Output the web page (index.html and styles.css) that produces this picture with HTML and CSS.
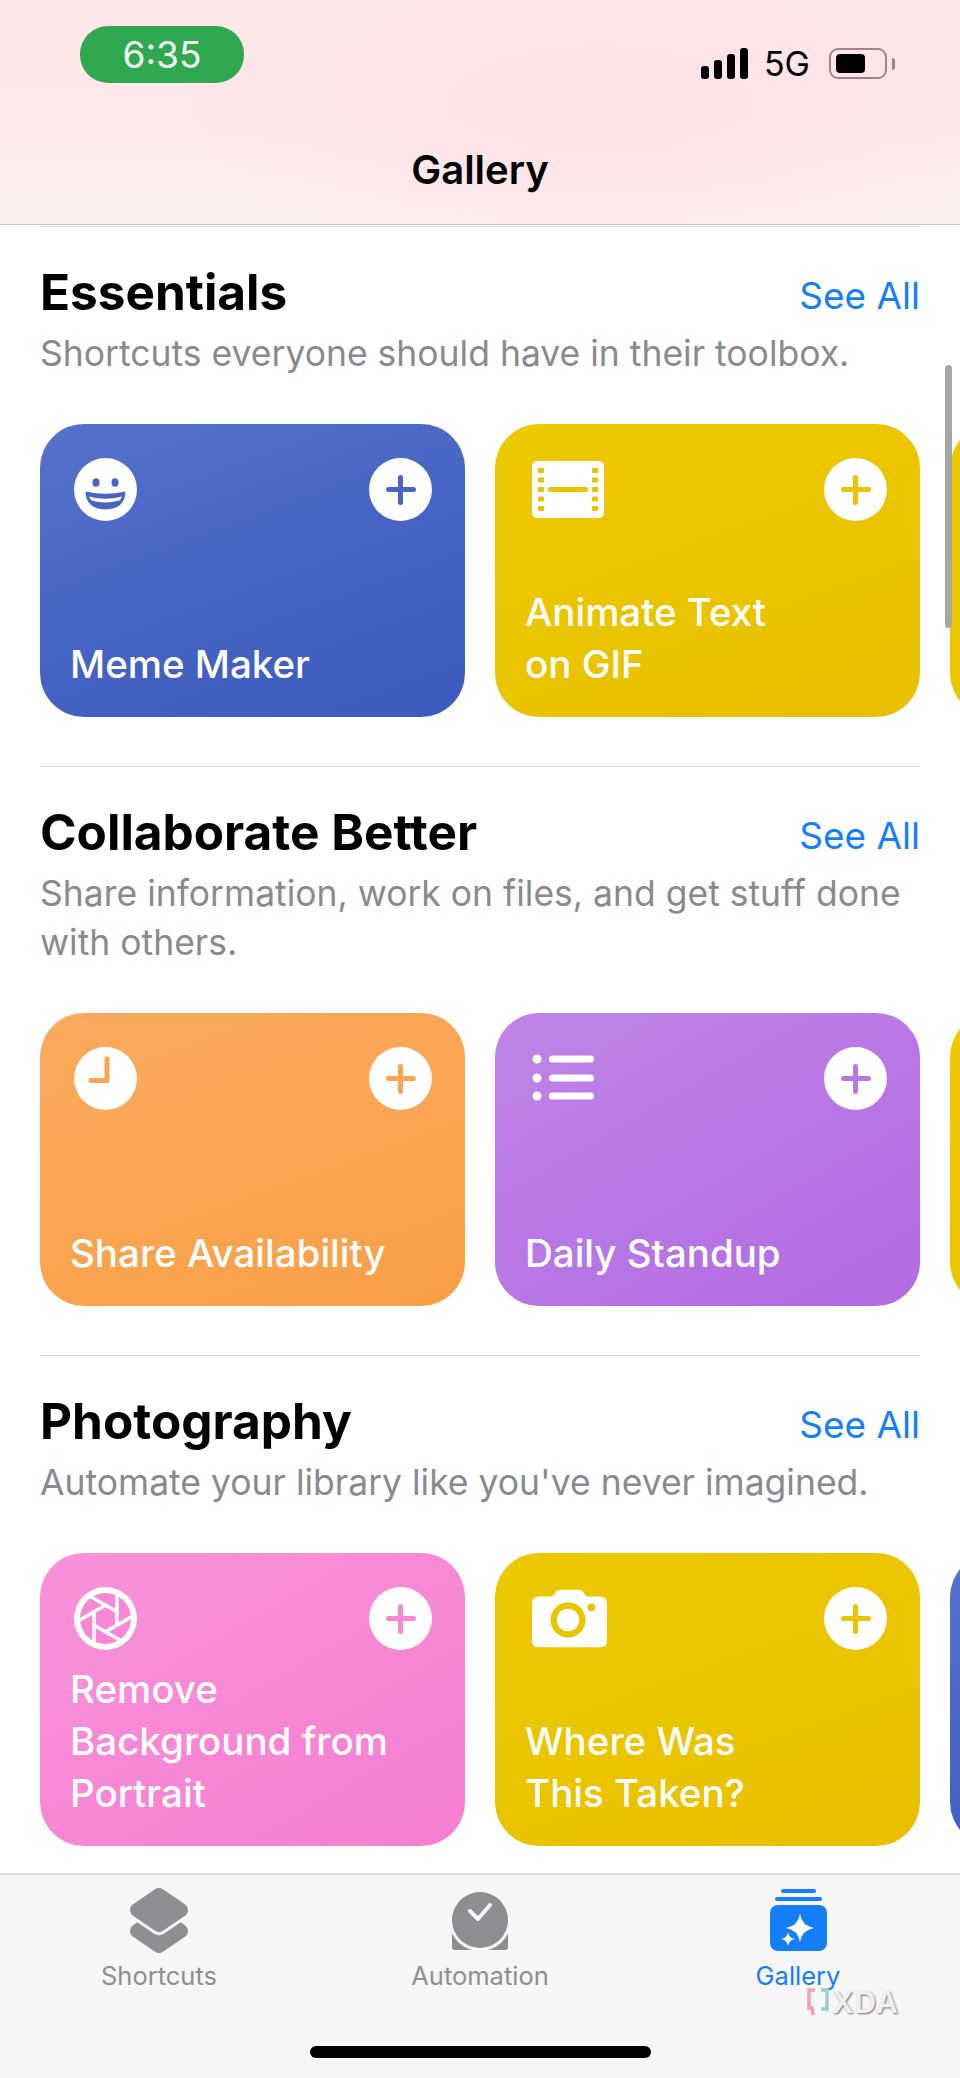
FILE: index.html
```html
<!DOCTYPE html>
<html lang="en">
<head>
    <meta charset="UTF-8">
    <meta name="viewport" content="width=device-width, initial-scale=1.0">
    <title>Gallery</title>
    <link rel="stylesheet" href="styles.css">
</head>
<body>
    <header class="top-bar">
        <div class="status-row">
            <div class="time-pill">6:35</div>
            <div class="status-icons">
                <svg class="signal" width="47" height="31" viewBox="0 0 47 31">
                    <rect x="0" y="18" width="8" height="13" rx="3"/>
                    <rect x="13" y="12" width="8" height="19" rx="3"/>
                    <rect x="26" y="6" width="8" height="25" rx="3"/>
                    <rect x="39" y="0" width="8" height="31" rx="3"/>
                </svg>
                <span class="network">5G</span>
                <div class="battery"><div class="battery-level"></div></div>
                <div class="battery-tip"></div>
            </div>
        </div>
        <h1 class="page-title">Gallery</h1>
    </header>

    <main class="gallery">
        <section class="group">
            <div class="group-head">
                <h2>Essentials</h2>
                <a class="see-all" href="#">See All</a>
            </div>
            <p class="group-sub">Shortcuts everyone should have in their toolbox.</p>
            <div class="card-row">
                <article class="card blue">
                    <div class="card-top">
                        <svg class="card-icon" width="63" height="63" viewBox="0 0 63 63">
                            <circle cx="31.5" cy="31.5" r="31.5" fill="#fff"/>
                            <ellipse class="hole" cx="22" cy="24.5" rx="3.5" ry="4.2"/>
                            <ellipse class="hole" cx="41" cy="24.5" rx="3.5" ry="4.2"/>
                            <path class="hole" d="M11.5 33.5 Q31.5 38 51.5 33.5 Q51 51 31.5 51.5 Q12 51 11.5 33.5Z"/>
                            <path d="M15 38.5 Q31.5 43 48 38.5 Q47 41 45.5 42.5 Q31.5 46.5 17.5 42.5 Q16 41 15 38.5Z" fill="#fff"/>
                        </svg>
                        <div class="add-btn"></div>
                    </div>
                    <h3>Meme Maker</h3>
                </article>
                <article class="card yellow">
                    <div class="card-top">
                        <svg class="card-icon inset" width="72" height="63" viewBox="0 0 72 63">
                            <rect x="0" y="3" width="72" height="57" rx="5" fill="#fff"/>
                            <g class="hole">
                                <rect x="6" y="10" width="6" height="5" rx="1"/>
                                <rect x="6" y="19.5" width="6" height="5" rx="1"/>
                                <rect x="6" y="29" width="6" height="5" rx="1"/>
                                <rect x="6" y="38.5" width="6" height="5" rx="1"/>
                                <rect x="6" y="48" width="6" height="5" rx="1"/>
                                <rect x="60" y="10" width="6" height="5" rx="1"/>
                                <rect x="60" y="19.5" width="6" height="5" rx="1"/>
                                <rect x="60" y="29" width="6" height="5" rx="1"/>
                                <rect x="60" y="38.5" width="6" height="5" rx="1"/>
                                <rect x="60" y="48" width="6" height="5" rx="1"/>
                                <rect x="16" y="29" width="40" height="5" rx="2.5"/>
                            </g>
                        </svg>
                        <div class="add-btn"></div>
                    </div>
                    <h3>Animate Text<br>on GIF</h3>
                </article>
                <article class="card yellow"></article>
            </div>
        </section>

        <section class="group">
            <div class="group-head">
                <h2>Collaborate Better</h2>
                <a class="see-all" href="#">See All</a>
            </div>
            <p class="group-sub">Share information, work on files, and get stuff done<br>with others.</p>
            <div class="card-row">
                <article class="card orange">
                    <div class="card-top">
                        <svg class="card-icon" width="63" height="63" viewBox="0 0 63 63">
                            <circle cx="31.5" cy="31.5" r="31.5" fill="#fff"/>
                            <path class="hole-line" d="M33 12 V33.5 H17"/>
                        </svg>
                        <div class="add-btn"></div>
                    </div>
                    <h3>Share Availability</h3>
                </article>
                <article class="card purple">
                    <div class="card-top">
                        <svg class="card-icon inset" width="62" height="63" viewBox="0 0 62 63">
                            <g fill="#fff">
                                <circle cx="5" cy="12" r="4.5"/>
                                <circle cx="5" cy="31" r="4.5"/>
                                <circle cx="5" cy="49" r="4.5"/>
                                <rect x="17" y="8.5" width="45" height="7" rx="3.5"/>
                                <rect x="17" y="27.5" width="45" height="7" rx="3.5"/>
                                <rect x="17" y="45.5" width="45" height="7" rx="3.5"/>
                            </g>
                        </svg>
                        <div class="add-btn"></div>
                    </div>
                    <h3>Daily Standup</h3>
                </article>
                <article class="card yellow"></article>
            </div>
        </section>

        <section class="group">
            <div class="group-head">
                <h2>Photography</h2>
                <a class="see-all" href="#">See All</a>
            </div>
            <p class="group-sub">Automate your library like you've never imagined.</p>
            <div class="card-row">
                <article class="card pink">
                    <div class="card-top">
                        <svg class="card-icon" width="63" height="63" viewBox="-31.5 -31.5 63 63">
                            <circle r="31.5" fill="#fff"/>
                            <circle class="hole" r="25.5"/>
                            <g class="blades">
                                <path d="M11.5 -26 V8"/>
                                <path d="M11.5 -26 V8" transform="rotate(60)"/>
                                <path d="M11.5 -26 V8" transform="rotate(120)"/>
                                <path d="M11.5 -26 V8" transform="rotate(180)"/>
                                <path d="M11.5 -26 V8" transform="rotate(240)"/>
                                <path d="M11.5 -26 V8" transform="rotate(300)"/>
                            </g>
                            <circle class="hole" r="9"/>
                        </svg>
                        <div class="add-btn"></div>
                    </div>
                    <h3>Remove<br>Background from<br>Portrait</h3>
                </article>
                <article class="card yellow">
                    <div class="card-top">
                        <svg class="card-icon inset" width="75" height="63" viewBox="0 0 77 63">
                            <path d="M7 9 H21 L25 3.5 Q26.5 2 29 2 H48 Q50.5 2 52 3.5 L56 9 H70 Q77 9 77 16 V55 Q77 61 70 61 H7 Q0 61 0 55 V16 Q0 9 7 9Z" fill="#fff"/>
                            <circle class="hole" cx="37" cy="33" r="18"/>
                            <circle cx="37" cy="33" r="11.5" fill="#fff"/>
                            <circle class="hole" cx="61" cy="20" r="4"/>
                        </svg>
                        <div class="add-btn"></div>
                    </div>
                    <h3>Where Was<br>This Taken?</h3>
                </article>
                <article class="card blue"></article>
            </div>
        </section>

        <div class="scroll-thumb"></div>
    </main>

    <nav class="tab-bar">
        <a class="tab" href="#">
            <svg width="58" height="65" viewBox="0 0 58 65">
                <path d="M29 28 L51 43 L29 58 L7 43Z" fill="#8e8e93" stroke="#8e8e93" stroke-width="14" stroke-linejoin="round"/>
                <path d="M29 7 L51 22 L29 37 L7 22Z" fill="#f6f6f6" stroke="#f6f6f6" stroke-width="20" stroke-linejoin="round"/>
                <path d="M29 7 L51 22 L29 37 L7 22Z" fill="#8e8e93" stroke="#8e8e93" stroke-width="14" stroke-linejoin="round"/>
            </svg>
            <span>Shortcuts</span>
        </a>
        <a class="tab" href="#">
            <svg width="56" height="65" viewBox="0 0 56 65">
                <rect x="0" y="36" width="56" height="26" rx="3" fill="#8e8e93"/>
                <circle cx="28" cy="32" r="31" fill="#f6f6f6"/>
                <circle cx="28" cy="32" r="28" fill="#8e8e93"/>
                <path d="M18 23 L26 31 L38 17" fill="none" stroke="#f6f6f6" stroke-width="4" stroke-linecap="round" stroke-linejoin="round"/>
            </svg>
            <span>Automation</span>
        </a>
        <a class="tab active" href="#">
            <svg width="57" height="65" viewBox="0 0 57 65">
                <rect x="11" y="1" width="35" height="4" rx="2" fill="#157efb"/>
                <rect x="5" y="9" width="47" height="4" rx="2" fill="#157efb"/>
                <rect x="0" y="17" width="57" height="46" rx="8" fill="#157efb"/>
                <path d="M30 26 Q32 38 44 40 Q32 42 30 54 Q28 42 16 40 Q28 38 30 26Z" fill="#fff"/>
                <path d="M18 44 Q19 50 25 51 Q19 52 18 58 Q17 52 11 51 Q17 50 18 44Z" fill="#fff"/>
            </svg>
            <span>Gallery</span>
        </a>
        <div class="xda-mark">
            <svg width="24" height="30" viewBox="0 0 24 30">
                <path d="M9 3 H3 V21 H6 L7 28" fill="none" stroke="#e8a5b5" stroke-width="3.5"/>
                <path d="M15 3 H21 V22 H15" fill="none" stroke="#9ccad6" stroke-width="3.5"/>
            </svg>
            <span>XDA</span>
        </div>
        <div class="home-bar"></div>
    </nav>
</body>
</html>
```

FILE: styles.css
```css
* {
    box-sizing: border-box;
}
body {
    margin: 0;
    width: 960px;
    height: 2078px;
    display: flex;
    flex-direction: column;
    overflow: hidden;
    font-family: Inter, "Liberation Sans", sans-serif;
    color: #000;
    background-color: #fff;
}
.top-bar {
    flex: none;
    height: 225px;
    padding: 26px 65px 0 80px;
    background:
        radial-gradient(ellipse 420px 180px at 600px 110px, #fee2e6 0%, rgba(254, 226, 230, 0) 100%),
        linear-gradient(180deg, #fde7e9 0%, #fde8ea 55%, #fdf0f1 100%);
    border-bottom: 1px solid #c9c6c7;
}
.status-row {
    display: flex;
    justify-content: space-between;
    align-items: flex-start;
}
.time-pill {
    width: 164px;
    height: 57px;
    border-radius: 28px;
    background-color: #2fa84f;
    color: #f0fff4;
    font-size: 37px;
    line-height: 57px;
    text-align: center;
}
.status-icons {
    display: flex;
    align-items: center;
    margin-top: 22px;
}
.signal {
    fill: #000;
}
.network {
    margin: 0 19px 0 16px;
    font-size: 34px;
    line-height: 31px;
}
.battery {
    width: 58px;
    height: 31px;
    padding: 4px 5px;
    border: 2px solid #9c868c;
    border-radius: 9px;
}
.battery-level {
    width: 29px;
    height: 100%;
    border-radius: 4px;
    background-color: #000;
}
.battery-tip {
    width: 3px;
    height: 12px;
    margin-left: 5px;
    border-radius: 0 3px 3px 0;
    background-color: #9c868c;
}
.page-title {
    margin: 62px 0 0 -80px;
    width: 960px;
    text-align: center;
    font-size: 40px;
    line-height: 50px;
    font-weight: 600;
}

.gallery {
    flex: 1;
    position: relative;
    overflow: hidden;
    padding: 1px 40px 0;
}
.group {
    padding: 37px 0 49px;
    border-top: 1px solid #d9d9d9;
}
.group-head {
    height: 56px;
    display: flex;
    justify-content: space-between;
    align-items: flex-start;
}
.group-head h2 {
    margin: 0;
    font-size: 49.5px;
    line-height: 56px;
    font-weight: 700;
}
.see-all {
    margin-top: 4px;
    color: #157efb;
    font-size: 37px;
    line-height: 56px;
    text-decoration: none;
}
.group-sub {
    margin: 9px 0 46px;
    color: #8a8a8e;
    font-size: 35.5px;
    line-height: 49px;
}
.card-row {
    display: flex;
    gap: 30px;
}
.card {
    flex: none;
    width: 425px;
    height: 293px;
    padding: 34px 33px 27px 30px;
    border-radius: 44px;
    display: flex;
    flex-direction: column;
    justify-content: space-between;
    background: var(--card-bg);
}
.card h3 {
    margin: 0;
    color: #fff;
    font-size: 38.5px;
    line-height: 52px;
    font-weight: 500;
}
.blue {
    --tint: #4766c4;
    --card-bg: linear-gradient(160deg, #5672cd 0%, #4563c3 55%, #3d5bbd 100%);
}
.yellow {
    --tint: #ebc400;
    --card-bg: linear-gradient(160deg, #edc900 0%, #e9c000 100%);
}
.orange {
    --tint: #faa552;
    --card-bg: linear-gradient(160deg, #fbab5e 0%, #f99f46 100%);
}
.purple {
    --tint: #b877e5;
    --card-bg: linear-gradient(150deg, #c085e8 0%, #b26ae2 100%);
}
.pink {
    --tint: #f788d6;
    --card-bg: linear-gradient(150deg, #f892d9 0%, #f67ed2 100%);
}
.card-top {
    display: flex;
    justify-content: space-between;
    align-items: flex-start;
    height: 63px;
    padding-left: 4px;
}
.card-icon {
    display: block;
    flex: none;
}
.card-icon.inset {
    margin-left: 3px;
}
.hole {
    fill: var(--tint);
}
.hole-line {
    fill: none;
    stroke: var(--tint);
    stroke-width: 5;
    stroke-linecap: round;
    stroke-linejoin: round;
}
.blades {
    fill: none;
    stroke: #fff;
    stroke-width: 3.5;
}
.add-btn {
    flex: none;
    width: 63px;
    height: 63px;
    border-radius: 50%;
    background-color: #fff;
    display: grid;
    place-items: center;
}
.add-btn::before,
.add-btn::after {
    content: "";
    grid-area: 1 / 1;
    border-radius: 3px;
    background-color: var(--tint);
}
.add-btn::before {
    width: 30px;
    height: 5px;
}
.add-btn::after {
    width: 5px;
    height: 30px;
}
.scroll-thumb {
    position: absolute;
    top: 140px;
    left: 945px;
    width: 7px;
    height: 263px;
    border-radius: 4px;
    background-color: #a6a6a8;
}

.tab-bar {
    flex: none;
    height: 205px;
    position: relative;
    padding: 13px 0 0;
    display: grid;
    grid-template-columns: 159px 321px 318px;
    background-color: #f6f6f6;
    border-top: 2px solid #dcdcdc;
}
.tab {
    width: 0;
    justify-self: end;
    display: flex;
    flex-direction: column;
    align-items: center;
    color: #8e8e93;
    font-size: 25.5px;
    line-height: 30px;
    text-decoration: none;
}
.tab svg {
    flex: none;
}
.tab span {
    margin-top: 8px;
}
.tab.active {
    color: #157efb;
}
.xda-mark {
    position: absolute;
    top: 112px;
    left: 806px;
    display: flex;
    align-items: center;
    gap: 2px;
    color: #f0f0f0;
    font-size: 30px;
    line-height: 30px;
    font-weight: 600;
    letter-spacing: 1px;
    text-shadow: 1px 1px 2px #6d6d6d;
}
.home-bar {
    position: absolute;
    top: 171px;
    left: 310px;
    width: 341px;
    height: 12px;
    border-radius: 6px;
    background-color: #000;
}
```
